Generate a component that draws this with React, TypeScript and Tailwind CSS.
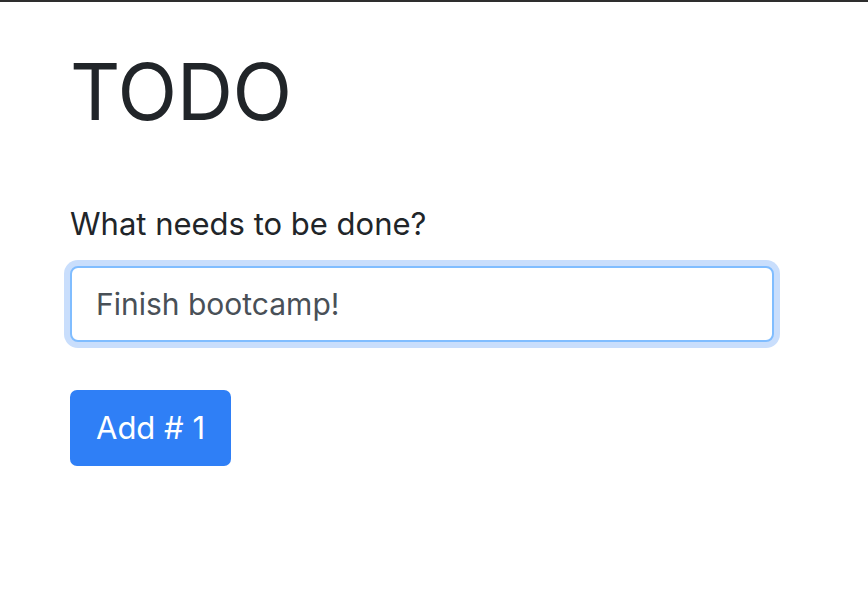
import { useState } from "react";

export default function App() {
  const [text, setText] = useState("Finish bootcamp!");
  const [count] = useState(1);

  return (
    <div
      className="min-h-[600px] bg-white border-t-2 border-[#2e2e2e] text-[#212529]"
      style={{ fontFamily: "Inter, 'Noto Sans', sans-serif" }}
    >
      <div className="ml-[70px] w-[704px] pt-[42px]">
        <h1 className="text-[78px] leading-[96px] font-normal tracking-[-0.5px]">TODO</h1>

        <form className="mt-[60px]" onSubmit={(e) => e.preventDefault()}>
          <label className="block text-[31px] leading-[48px] mb-[18px]">What needs to be done?</label>
          <input
            value={text}
            onChange={(e) => setText(e.target.value)}
            className="block w-full h-[76px] px-[24px] text-[30px] text-[#495057] bg-white border-2 border-[#80bdff] rounded-[8px] outline-none ring-[6px] ring-[#c9defc]"
          />
          <button
            type="submit"
            className="mt-[48px] h-[76px] px-[26px] text-[31px] text-white bg-[#2f7ff6] rounded-[7px]"
          >
            Add # {count}
          </button>
        </form>
      </div>
    </div>
  );
}
